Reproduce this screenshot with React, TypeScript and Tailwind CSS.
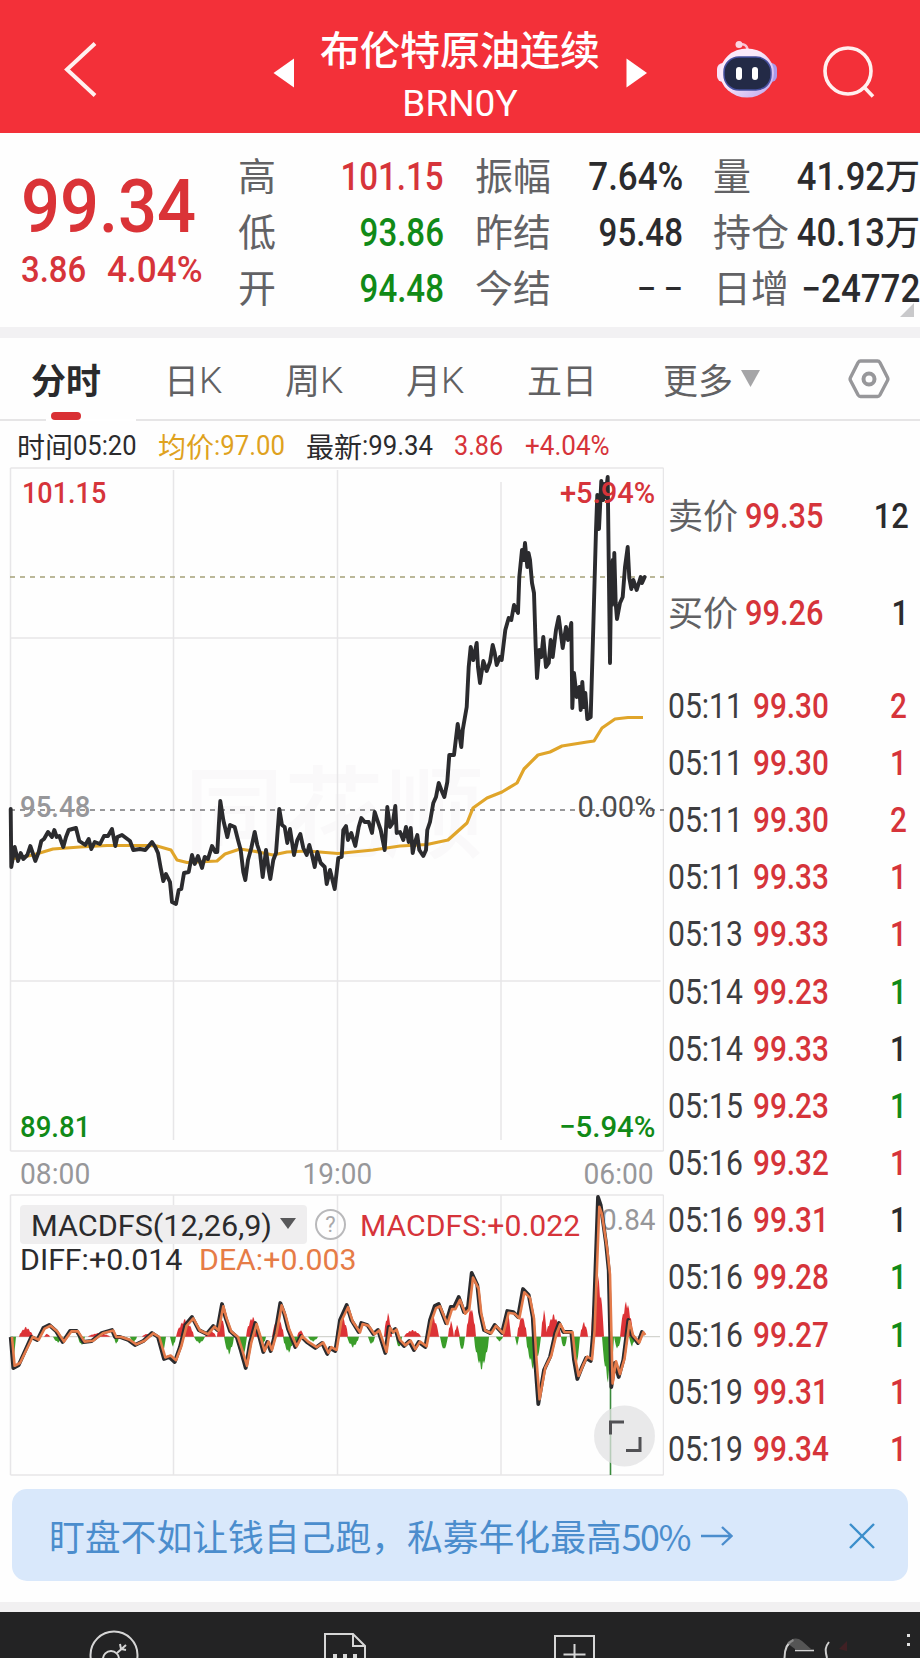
import type { ReactNode } from 'react';
import { twMerge } from 'tailwind-merge';

type Tone = 'up' | 'down' | 'flat';

const toneClass: Record<Tone, string> = {
  up: 'text-[#d6343a]',
  down: 'text-[#118a17]',
  flat: 'text-[#2b2b2d]',
};

const quoteColumns: { rowClass: string; rows: { label: string; value: string; unit?: string; tone: Tone }[] }[] = [
  {
    rowClass: 'w-[206px]',
    rows: [
      { label: '高', value: '101.15', tone: 'up' },
      { label: '低', value: '93.86', tone: 'down' },
      { label: '开', value: '94.48', tone: 'down' },
    ],
  },
  {
    rowClass: 'ml-[31px] w-[208px]',
    rows: [
      { label: '振幅', value: '7.64%', tone: 'flat' },
      { label: '昨结', value: '95.48', tone: 'flat' },
      { label: '今结', value: '– –', tone: 'flat' },
    ],
  },
  {
    rowClass: 'ml-[30px] w-[207px]',
    rows: [
      { label: '量', value: '41.92', unit: '万', tone: 'flat' },
      { label: '持仓', value: '40.13', unit: '万', tone: 'flat' },
      { label: '日增', value: '−24772', tone: 'flat' },
    ],
  },
];

const trades: [string, string, string, Tone][] = [
  ['05:11', '99.30', '2', 'up'],
  ['05:11', '99.30', '1', 'up'],
  ['05:11', '99.30', '2', 'up'],
  ['05:11', '99.33', '1', 'up'],
  ['05:13', '99.33', '1', 'up'],
  ['05:14', '99.23', '1', 'down'],
  ['05:14', '99.33', '1', 'flat'],
  ['05:15', '99.23', '1', 'down'],
  ['05:16', '99.32', '1', 'up'],
  ['05:16', '99.31', '1', 'flat'],
  ['05:16', '99.28', '1', 'down'],
  ['05:16', '99.27', '1', 'down'],
  ['05:19', '99.31', '1', 'up'],
  ['05:19', '99.34', '1', 'up'],
];

const pricePoints =
  '10.7,809 11.3,867 14.7,847 18,861 20.7,853 23.3,859 27.3,855 30.3,846 32.7,853 35.3,861 38.7,852 41.3,841 44,839 48,832 52,837 54.3,830 56.7,837 59.3,836 63.3,847 66,837 68.7,830 76,828 79.3,841 85.3,845 88.7,839 91.3,849 94.7,842 100,844 104,836 108,836 112,829 115.3,846 117.3,837 122,835 126,838 130,841 133.3,850 140,849 145.3,850 152,842 155.3,847 158,853 160.7,868 163.3,881 166,874 170,882 172,902 176,904 178.7,890 181.3,889 184,873 188.7,872 192,855 194.7,864 198,856 202,868 204.7,857 208,859 212,846 215.3,852 217.3,852 218.7,827 220.3,801 223.3,820 227.3,837 230,825 234.7,827 238,840 240.7,850 243.3,872 245.3,880 248,860 251.3,848 254.7,832 257.3,845 260,853 262.7,877 266,850 268.7,870 270.3,879 273.3,860 276,853 279.3,809 282,825 284.7,827 287.3,843 290,829 294,855 297.3,840 300.3,834 303.3,848 306.7,855 309.3,845 312,855 314.7,867 317.3,852 320.7,863 324.7,867 326.7,884 330,870 334.7,889 338.3,858 341.7,857 343.3,830 346,826 348,840 351.3,833 355.3,846 358.7,827 361.3,818 364.7,822 368.7,822 372,833 374.7,812 377.3,820 380.7,830 384.7,850 387.3,807 390,827 392.7,823 395.3,806 396.7,833 400,832 403.3,840 406,827 408.7,842 410.7,828 412.7,853 414.7,843 417.3,835 419.3,850 423.3,856 426,850 427.3,830 430,822 433.3,803 436,797 438.7,783 441.3,790 444.3,797 447.3,782 449.3,755 454,755 457.7,724 461.3,747 462.7,730 466.7,707 468.7,667 470.7,647 473.3,660 476.7,643 478,667 480,683 483.3,661 486.7,671 490,662 492.7,645 494.7,653 496.7,665 500,657 501.7,660 505.3,630 508.7,618 511.3,620 514,605 518,613 519.3,577 522,550 523.5,560 525,543 527.3,567 528.5,553 530,560 532,583 534,593 535.7,647 537,678 539.3,650 541.3,657 543.3,637 546,667 548.7,663 550.7,640 552.7,657 556,630 558.7,617 562.7,648 566,627 568,640 571.3,623 572.3,708 574,673 576.7,697 579.3,687 580.7,710 582.3,682 584,707 585.3,693 587.3,719 590.7,717 593.3,627 596,530 597.3,495 599,529 601.3,481 603.3,500 604.3,484 605.3,497 607.7,477 608.7,560 610,663 611.3,563 612,605 612.7,560 613.5,600 614.3,553 615.7,603 617,619 620,603 622.7,597 625,567 627.7,547 629.3,578 631.3,589 633.3,580 636.7,590 640.7,577 642,583 644.7,577';

const averagePoints =
  '11,859 23,857 33,855 53,849 80,847 107,845.5 147,845.5 157,846 171,850 177,860 187,862.5 217,861 225,854 240,849 253,851 273,855 287,852 307,851 338,853.5 373,850 400,846 427,844.5 448,840 467,823 473,808 487,798 502,792 517,783 524,769 538,755 550,752 562,746 587,742 594,741 602,728 615,719 628,717.5 643,717.5';

const macdZero = 1336.7;

const diffLine: [number, number][] = [
  [10.7, 1337], [13.3, 1368], [18.7, 1365], [31.3, 1337], [37.3, 1340], [43.3, 1328], [49.3, 1325], [56, 1331],
  [62.7, 1342], [70, 1331], [76.7, 1331], [83.3, 1342], [91.7, 1341], [101.7, 1333], [112, 1330], [115, 1337],
  [120, 1337], [128.3, 1340], [135, 1345], [143.3, 1341], [152, 1333], [158, 1337], [164, 1359], [169.3, 1357],
  [174.7, 1362], [180, 1347], [185.3, 1325], [192, 1317], [198.7, 1330], [206.7, 1334], [213.3, 1326], [217.3, 1330],
  [222, 1304], [225.3, 1317], [230, 1331], [236.7, 1337], [240.7, 1350], [245.7, 1368], [250, 1343], [255.3, 1323],
  [259.3, 1337], [263.3, 1352], [267.3, 1342], [270.7, 1351], [275.3, 1333], [280.3, 1303], [284, 1313], [288, 1329],
  [295.3, 1347], [300.7, 1336], [306.7, 1342], [315.3, 1348], [322, 1343], [327.3, 1354], [330, 1348], [335.3, 1351],
  [340, 1320], [346.7, 1305], [351.3, 1320], [358.7, 1332], [361.3, 1323], [367.3, 1325], [373.3, 1334], [378, 1330],
  [385.3, 1353], [388.7, 1327], [392, 1332], [395.3, 1329], [398.7, 1340], [404, 1346], [409.3, 1341], [414, 1350],
  [418.7, 1342], [425.3, 1347], [430, 1320], [434.7, 1306], [438.7, 1304], [446, 1323], [450.7, 1307], [454, 1307],
  [458.7, 1297], [464, 1312], [468, 1307], [471.7, 1273], [477.3, 1285], [480, 1312], [484, 1330], [490, 1333],
  [494.7, 1325], [502, 1333], [507.3, 1311], [513.3, 1312], [518, 1317], [523, 1289], [528.7, 1295], [532.7, 1317],
  [535.3, 1363], [538.3, 1404], [544, 1370], [550, 1357], [555.3, 1333], [559, 1323], [563.3, 1332], [571.3, 1332],
  [574, 1360], [577.3, 1379], [582, 1367], [586, 1358], [590.7, 1361], [593.3, 1330], [598, 1197], [600.7, 1205],
  [606, 1243], [608.7, 1270], [611.3, 1387], [614.7, 1363], [618.7, 1377], [623.3, 1360], [628.3, 1320], [631.7, 1335],
  [638, 1343], [642, 1332], [644, 1335],
];

// [from, to, peak height]: one cluster of histogram bars, negative heights hang below zero
const histogram: [number, number, number][] = [
  [10, 16, -25], [19, 33, 10], [44, 50, 3], [53, 63, -6], [78, 85, -9], [88, 110, 4], [114, 119, -8], [130, 137, -6],
  [142, 152, 3], [159, 166, -17], [170, 176, -10], [176, 194, 18], [194, 205, -7], [205, 216, 7], [217, 225, 24],
  [224, 234, -18], [237, 247, -23], [246, 259, 21], [260, 266, -8], [272, 284, 20], [283, 294, -17], [294, 300, -9],
  [297, 304, 7], [308, 318, -5], [336, 348, 22], [347, 359, -11], [368, 375, -8], [384, 392, 24], [396, 402, -12],
  [404, 421, 7], [426, 439, 22], [440, 448, -14], [448, 454, 16], [454, 460, 12], [459, 465, -15], [466, 476, 31],
  [474, 489, -34], [496, 503, -5], [503, 511, 28], [515, 519, -9], [517, 527, 22], [526, 541, -34], [541, 547, 27],
  [546, 561, 23], [561, 567, -12], [572, 580, -30], [580, 588, 15], [591, 604, 64], [602, 614, -46], [614, 621, -13],
  [620, 633, 37], [629, 635, -10],
];

const histogramPath = (up: boolean) =>
  histogram
    .filter(([, , h]) => h > 0 === up)
    .map(([from, to, h]) => {
      const mid = (from + to) / 2;
      const half = (to - from) / 2;
      const steps: string[] = [];
      for (let x = from; x <= to; x += 1) {
        const envelope = 1 - Math.abs(x - mid) / half;
        const jag = (Math.round(x) % 3 === 0 ? 0.8 : 1) * Math.pow(envelope, 0.6);
        steps.push(`L${x} ${(macdZero - h * jag).toFixed(1)}`);
      }
      return `M${from} ${macdZero}${steps.join('')}L${to} ${macdZero}Z`;
    })
    .join('');

const diffPoints = diffLine.map(([x, y]) => `${x},${y}`).join(' ');
const deaPoints = diffLine.map(([x, y]) => `${x + 1.3},${(macdZero + (y - macdZero) * 0.93).toFixed(1)}`).join(' ');

/** Condensed figures used for every price and volume. */
function Num({ children, className }: { children: ReactNode; className?: string }) {
  return (
    <span
      className={twMerge(
        "inline-block origin-left scale-x-[0.88] whitespace-nowrap font-['Roboto','Noto_Sans_CJK_SC',sans-serif] font-medium",
        className,
      )}
    >
      {children}
    </span>
  );
}

function RobotIcon() {
  return (
    <svg className="h-[58px] w-[62px]" viewBox="0 0 62 58">
      <defs>
        <linearGradient id="shell" x1="0" y1="0" x2="1" y2="1">
          <stop offset="0.4" stopColor="#fbeafa" />
          <stop offset="1" stopColor="#b9a2ee" />
        </linearGradient>
      </defs>
      <path d="M22 5c6-2 9 0 10 6" fill="none" stroke="#f9c4d4" strokeWidth="2.5" />
      <circle cx="23" cy="4.500" r="3.500" fill="#fbd5e2" />
      <rect x="1" y="23" width="12" height="19" rx="6" fill="#f8e2f7" />
      <rect x="49" y="23" width="12" height="19" rx="6" fill="#a99aec" />
      <ellipse cx="31" cy="33" rx="27" ry="24.500" fill="url(#shell)" />
      <rect x="8" y="17" width="47" height="33" rx="15" fill="#232a46" stroke="#4650a0" strokeWidth="1.500" />
      <rect x="20" y="27" width="6" height="13" rx="3" fill="#fff" />
      <rect x="36" y="27" width="6" height="13" rx="3" fill="#fff" />
    </svg>
  );
}

function Header() {
  return (
    <header className="flex h-[133px] shrink-0 items-center bg-[#f33039] text-white">
      <svg className="mt-[5px] ml-[62px] h-14 w-9" viewBox="0 0 36 56" fill="none" stroke="#fff0ef" strokeWidth="4">
        <path d="M33 2.500 5 28.500l28 26" />
      </svg>
      <svg className="mt-3 ml-[175px] h-[30px] w-[22px]" viewBox="0 0 22 30" fill="#fff">
        <path d="M0.500 15 21 0.500v29z" />
      </svg>
      <div className="ml-[25px] flex w-[280px] flex-col items-center pt-[15px]">
        <h1 className="text-[40px] font-medium leading-[56px] whitespace-nowrap">布伦特原油连续</h1>
        <div className="pt-[3px] font-['Roboto'] text-[37px] leading-[50px]">
          <span className="inline-block">BRN0Y</span>
        </div>
      </div>
      <svg className="mt-3 ml-[26px] h-[30px] w-[22px]" viewBox="0 0 22 30" fill="#fff">
        <path d="M21 15 0.500 0.500v29z" />
      </svg>
      <div className="mt-1 ml-[68px]">
        <RobotIcon />
      </div>
      <svg className="mt-[11px] ml-[44px] h-[54px] w-[54px]" viewBox="0 0 54 54" fill="none" stroke="#fff0ef" strokeWidth="3.6">
        <circle cx="26" cy="26" r="23" />
        <path d="m42 42 9 9.500" />
      </svg>
    </header>
  );
}

function Quote() {
  return (
    <section className="relative flex h-[194px] shrink-0 overflow-hidden">
      <div className="w-[238px] shrink-0 pl-[21px] text-[#d6343a]">
        <div className="mt-[25px] h-[84px] text-[75px] leading-[84px]">
          <Num className="scale-x-[0.915] text-[#da3337]">99.34</Num>
        </div>
        <div className="mt-[6px] flex h-11 text-[37px] leading-[44px]">
          <Num className="w-[86px] scale-x-[0.89]">3.86</Num>
          <Num className="scale-x-[0.95]">4.04%</Num>
        </div>
      </div>
      {quoteColumns.map((col, i) => (
        <div key={i} className={twMerge('mt-[16px] shrink-0', col.rowClass)}>
          {col.rows.map((row) => (
            <div key={row.label} className="flex h-14 items-center">
              <span className="-mt-[6px] w-0 text-[38px] leading-none whitespace-nowrap text-[#626265]">{row.label}</span>
              <span className={twMerge('ml-auto flex items-center text-[38px] leading-[44px]', toneClass[row.tone])}>
                <Num
                  className={twMerge(
                    'origin-right scale-x-[0.87]',
                    row.value.endsWith('%') && 'scale-x-[0.92]',
                    row.value.startsWith('−') && 'scale-x-[0.92]',
                    row.value.startsWith('–') && 'scale-x-[0.78] font-normal',
                    row.unit && 'scale-x-[0.91]',
                  )}
                >
                  {row.value}
                </Num>
                {row.unit && <span className="-mt-[6px] text-[35px] font-medium">{row.unit}</span>}
              </span>
            </div>
          ))}
        </div>
      ))}
      <svg className="absolute right-[6px] bottom-[10px] size-[14px]" viewBox="0 0 14 14" fill="#c9c9cb">
        <path d="M14 0v14H0z" />
      </svg>
    </section>
  );
}

function KTab({ period, className }: { period: string; className: string }) {
  return (
    <span className={twMerge('flex items-center', className)}>
      {period}
      <span className="pt-[3px] font-['Roboto'] text-[37px] font-[350]">K</span>
    </span>
  );
}

function Tabs() {
  return (
    <nav className="relative flex h-[83px] shrink-0 items-center border-b-2 border-[#e6e5e6] text-[35px] leading-none text-[#616163]">
      <span className="ml-[31px] w-[133px] font-bold text-[#2a2a2c]">分时</span>
      <KTab period="日" className="w-[121px]" />
      <KTab period="周" className="w-[121px]" />
      <KTab period="月" className="w-[121px]" />
      <span className="w-[136px]">五日</span>
      <span>更多</span>
      <svg className="ml-[8px] h-[17px] w-[19px]" viewBox="0 0 19 17" fill="#a5a5a7">
        <path d="M0 0h19l-9.500 17z" />
      </svg>
      <svg className="ml-[88px] h-[42px] w-[42px]" viewBox="0 0 42 42" fill="none" stroke="#97979a" strokeWidth="3.4" strokeLinejoin="round">
        <path d="M12.500 3h17q1.500 0 2.400 1.500L39.500 19.500q.8 1.500 0 3L31.900 37q-.9 1.500-2.400 1.500h-17q-1.500 0-2.400-1.500L2.500 22.500q-.8-1.500 0-3L10.100 4.500Q11 3 12.500 3z" />
        <circle cx="21" cy="21" r="5.500" strokeWidth="4" />
      </svg>
      <span className="absolute -bottom-[2px] left-[46px] h-[2px] w-[90px] bg-white" />
      <span className="absolute -bottom-px left-[51px] h-2 w-[30px] rounded-full bg-[#d92f33]" />
    </nav>
  );
}

function Legend() {
  return (
    <div className="flex h-[46px] shrink-0 items-center pt-[3px] pl-[17px] text-[28px] leading-none text-[#2b2b2d]">
      <span className="flex w-[141px] items-center">时间<Num className="scale-x-[0.91] font-normal">05:20</Num></span>
      <span className="flex w-[148px] items-center text-[#dfa21e]">均价<Num className="scale-x-[0.92] font-normal">:97.00</Num></span>
      <span className="flex w-[148px] items-center">最新<Num className="scale-x-[0.92] font-normal">:99.34</Num></span>
      <Num className="w-[71px] scale-x-[0.9] font-normal text-[#d6343a]">3.86</Num>
      <Num className="scale-x-[0.93] font-normal text-[#d6343a]">+4.04%</Num>
    </div>
  );
}

function PriceChart() {
  return (
    <div className="relative h-[685px] w-[664px] shrink-0 overflow-hidden font-['Roboto'] text-[30px] leading-[34px]">
      <svg className="h-full w-full" viewBox="0 467 664 685" fill="none">
        <text x="184" y="850" fontSize="100" fill="#faf9fa" fontFamily="Noto Sans CJK SC" fontWeight="500">同花顺</text>
        <g stroke="#e7e6e8" strokeWidth="1.5">
          <path d="M10.500 468h653M10.500 1151h653M10.500 468v683M663.500 468v683" />
          <path d="M173.500 470v670M337.500 470v680M501 482v658M10.500 638h650M10.500 981h650" />
        </g>
        <path d="M10 577h654" stroke="#a5a178" strokeWidth="1.400" strokeDasharray="5 5" />
        <path d="M10 810h654" stroke="#77777a" strokeWidth="1.400" strokeDasharray="5 5" />
        <polyline points={averagePoints} stroke="#e0a52a" strokeWidth="3.200" strokeLinejoin="round" />
        <polyline points={pricePoints} stroke="#2b2b2e" strokeWidth="3.900" strokeLinejoin="round" strokeLinecap="round" />
      </svg>
      <Num className="absolute top-[9px] left-[22px] scale-x-[0.9] text-[#d6343a]">101.15</Num>
      <Num className="absolute top-[9px] right-[9px] origin-right scale-x-[0.97] text-[#d6343a]">+5.94%</Num>
      <Num className="absolute top-[323px] left-[20px] scale-x-[0.92] text-[#97979a]">95.48</Num>
      <Num className="absolute top-[323px] right-[9px] origin-right scale-x-[0.97] font-normal text-[#4b4b4d]">0.00%</Num>
      <Num className="absolute top-[643px] left-[20px] scale-x-[0.92] text-[#118a17]">89.81</Num>
      <Num className="absolute top-[643px] right-[9px] origin-right scale-x-[0.98] text-[#118a17]">−5.94%</Num>
    </div>
  );
}

function MacdChart() {
  return (
    <div className="relative h-[283px] w-[664px] shrink-0 font-['Roboto'] text-[30px] leading-[34px]">
      <svg className="absolute inset-0 h-full w-full" viewBox="0 1194 664 283" fill="none">
        <g stroke="#e7e6e8" strokeWidth="1.500">
          <path d="M10.500 1195h653M10.500 1475h653M10.500 1195v280M663.500 1195v280" />
          <path d="M173.500 1195v280M337.500 1195v280M501 1195v280" />
        </g>
        <path d={`M10 ${macdZero}h650`} stroke="#c9cbc4" strokeWidth="1" />
      </svg>
      <div className="absolute top-[11px] left-5 flex h-[39px] w-[287px] items-center rounded bg-[#efeeef] pt-[2px] pl-[11px] text-[#2b2b2d]">
        <span className="w-[243px] whitespace-nowrap">
          <span className="inline-block origin-left scale-x-[1.02]">MACDFS(12,26,9)</span>
        </span>
        <svg className="-mt-1 ml-[6px] h-[11px] w-4" viewBox="0 0 16 11" fill="#58585a">
          <path d="M0 0h16L8 11z" />
        </svg>
      </div>
      <span className="absolute top-[15px] left-[315px] flex size-[31px] items-center justify-center rounded-full border-2 border-[#b9b9bb] text-[22px] text-[#a9a9ab]">
        ?
      </span>
      <span className="absolute top-[15px] left-[360px] origin-left scale-x-[1.005] whitespace-nowrap text-[#d6343a]">MACDFS:+0.022</span>
      <Num className="absolute top-[9px] right-[9px] origin-right scale-x-[0.93] font-normal text-[#97979a]">0.84</Num>
      <span className="absolute top-[49px] left-[20px] origin-left scale-x-[1.01] whitespace-nowrap text-[#2b2b2d]">DIFF:+0.014</span>
      <span className="absolute top-[49px] left-[199px] origin-left scale-x-[1.01] whitespace-nowrap text-[#e67c47]">DEA:+0.003</span>
      <svg className="absolute inset-0 h-full w-full" viewBox="0 1194 664 283" fill="none">
        <path d={histogramPath(true)} fill="#dc3236" />
        <path d={histogramPath(false)} fill="#3a9d2a" />
        <path d={`M610.500 ${macdZero}V1475`} stroke="#3a8a3c" strokeWidth="1.600" />
        <polyline points={diffPoints} stroke="#2b2b2e" strokeWidth="3.800" strokeLinejoin="round" />
        <polyline points={deaPoints} stroke="#e37a4a" strokeWidth="2.600" strokeLinejoin="round" />
        <circle cx="624.500" cy="1436" r="30.500" fill="#e2e2e3" fillOpacity="0.75" />
        <path d="M610.500 1434.500v-12.500H624M640 1437v13.500h-14" stroke="#515154" strokeWidth="3" />
      </svg>
    </div>
  );
}

function Deals() {
  return (
    <aside className="w-[256px] pl-1 text-[35px] leading-[40px]">
      {[
        ['卖价', '99.35', '12'],
        ['买价', '99.26', '1'],
      ].map(([label, price, volume]) => (
        <div key={label} className="flex h-[97px] items-center pt-[2px]">
          <span className="-mt-[6px] w-[77px] text-[35px] text-[#616163]">{label}</span>
          <Num className="flex-1 text-[#d6343a]">{price}</Num>
          <Num className="mr-[11px] origin-right text-[#2b2b2d]">{volume}</Num>
        </div>
      ))}
      <div className="pt-[17px]">
        {trades.map(([time, price, volume, tone], i) => (
          <div key={i} className="flex h-[57.200px] items-center">
            <Num className="w-[85px] scale-x-[0.86] font-normal text-[#3d3d40]">{time}</Num>
            <Num className="flex-1 scale-x-[0.85] text-[#d6343a]">{price}</Num>
            <Num className={twMerge('mr-[13px] origin-right scale-x-[0.85]', toneClass[tone])}>{volume}</Num>
          </div>
        ))}
      </div>
    </aside>
  );
}

function Banner() {
  return (
    <div className="mx-3 mt-[6px] flex h-[92px] shrink-0 items-center rounded-[15px] bg-[#d9e8fb] pt-px pl-[37px] text-[#4b8dcd]">
      <span className="text-[35.800px] whitespace-nowrap">
        盯盘不如让钱自己跑，私募年化最高<span className="tracking-[-1.5px]">50%</span>
      </span>
      <svg className="ml-[11px] h-5 w-8" viewBox="0 0 32 20" fill="none" stroke="currentColor" strokeWidth="2.4">
        <path d="M0 10h30M21 1l9.500 9L21 19" />
      </svg>
      <svg className="mr-[33px] ml-auto size-[26px]" viewBox="0 0 26 26" fill="none" stroke="#3b8ecb" strokeWidth="2.4">
        <path d="m1 1 24 24M25 1 1 25" />
      </svg>
    </div>
  );
}

function BottomBar() {
  return (
    <footer className="flex h-[46px] shrink-0 items-start overflow-hidden bg-[#232324]">
      <svg className="mt-[18px] ml-[89px] size-[50px] shrink-0" viewBox="0 0 50 50" fill="none" stroke="#d6d6d6" strokeWidth="2">
        <circle cx="25" cy="25" r="23.500" />
        <circle cx="22" cy="29" r="8" />
        <path d="m28 23 9-8M31 14l1 5 5 1" />
      </svg>
      <svg className="mt-5 ml-[184px] h-[50px] w-[44px] shrink-0" viewBox="0 0 44 50" fill="none" stroke="#d6d6d6" strokeWidth="2">
        <path d="M2 50V2h28l12 12v36M30 2v12h12" />
        <path d="M12 22v6M22 22v6M32 22v6" strokeWidth="4" />
      </svg>
      <svg className="mt-[22px] ml-[186px] h-[50px] w-[43px] shrink-0" viewBox="0 0 43 50" fill="none" stroke="#d6d6d6" strokeWidth="2">
        <path d="M2 50V2h39v48M21.500 10v24M10.500 20.500h22" />
      </svg>
      <svg className="ml-[184px] h-[46px] w-[140px] shrink-0" viewBox="780 1612 140 46" fill="none">
        <path d="M784.500 1658c0-9 2-15 9-18M827 1658c-2-8-2-11 2-16" stroke="#cfcfcf" strokeWidth="2" />
        <path d="M787 1643c5-5 10-6 15-2l9 8h-16z" fill="#6b6b6b" fillOpacity="0.7" />
        <path d="M795 1650.500h19" stroke="#d2d2d2" strokeWidth="1.600" />
        <path d="m839 1649 8-8v10z" fill="#402024" />
        <path d="M907 1634h3v3h-3zM907 1643h3v3h-3z" fill="#e2e2e2" />
      </svg>
    </footer>
  );
}

export default function App() {
  return (
    <main className="flex h-[1658px] w-[920px] flex-col overflow-hidden bg-[#fefefe] font-['Noto_Sans_CJK_SC',sans-serif]">
      <Header />
      <Quote />
      <div className="h-[11px] shrink-0 bg-[#f2f1f3]" />
      <Tabs />
      <Legend />
      <div className="flex h-[1016px] shrink-0">
        <div className="flex w-[664px] flex-col">
          <PriceChart />
          <div className="flex h-[42px] items-center justify-between pt-[2px] pr-[10px] pl-[20px] text-[30px] leading-none text-[#97979a]">
            <Num className="scale-x-[0.94] font-normal">08:00</Num>
            <Num className="origin-center scale-x-[0.93] font-normal">19:00</Num>
            <Num className="origin-right scale-x-[0.94] font-normal">06:00</Num>
          </div>
          <MacdChart />
        </div>
        <Deals />
      </div>
      <Banner />
      <div className="mt-auto h-[10px] shrink-0 bg-[#f1f0f1]" />
      <BottomBar />
    </main>
  );
}
